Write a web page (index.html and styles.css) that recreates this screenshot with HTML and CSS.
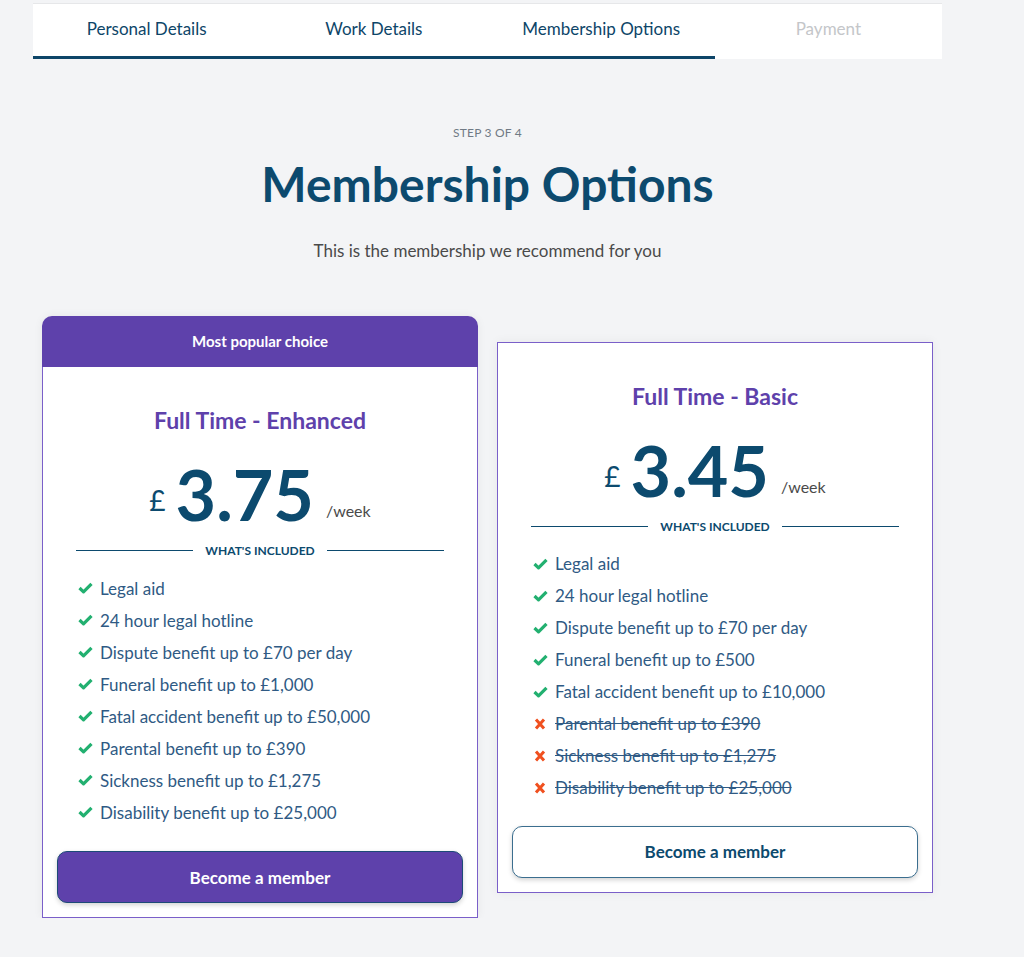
FILE: index.html
```html
<!DOCTYPE html>
<html lang="en">
<head>
  <meta charset="UTF-8" />
  <meta name="viewport" content="width=device-width, initial-scale=1.0"/>
  <title>Membership Options</title>
  <link rel="stylesheet" href="styles.css">
</head>
<body>
  <div class="page">
    <!-- Steps -->
    <nav class="steps">
      <div class="step done">Personal Details</div>
      <div class="step done">Work Details</div>
      <div class="step done">Membership Options</div>
      <div class="step">Payment</div>
    </nav>

    <header class="intro">
      <p class="step-count">STEP 3 OF 4</p>
      <h1>Membership Options</h1>
      <p class="lead">This is the membership we recommend for you</p>
    </header>

    <div class="plans">
      <!-- Enhanced -->
      <div class="plan popular">
        <div class="plan-badge">Most popular choice</div>
        <div class="plan-body">
          <h2 class="plan-name">Full Time - Enhanced</h2>
          <div class="price">
            <span class="currency">£</span>
            <span class="amount">3.75</span>
            <span class="per">/week</span>
          </div>
          <div class="included"><span>WHAT'S INCLUDED</span></div>
          <ul class="benefits">
            <li class="yes">Legal aid</li>
            <li class="yes">24 hour legal hotline</li>
            <li class="yes">Dispute benefit up to £70 per day</li>
            <li class="yes">Funeral benefit up to £1,000</li>
            <li class="yes">Fatal accident benefit up to £50,000</li>
            <li class="yes">Parental benefit up to £390</li>
            <li class="yes">Sickness benefit up to £1,275</li>
            <li class="yes">Disability benefit up to £25,000</li>
          </ul>
          <button class="btn btn-primary">Become a member</button>
        </div>
      </div>

      <!-- Basic -->
      <div class="plan">
        <div class="plan-body">
          <h2 class="plan-name">Full Time - Basic</h2>
          <div class="price">
            <span class="currency">£</span>
            <span class="amount">3.45</span>
            <span class="per">/week</span>
          </div>
          <div class="included"><span>WHAT'S INCLUDED</span></div>
          <ul class="benefits">
            <li class="yes">Legal aid</li>
            <li class="yes">24 hour legal hotline</li>
            <li class="yes">Dispute benefit up to £70 per day</li>
            <li class="yes">Funeral benefit up to £500</li>
            <li class="yes">Fatal accident benefit up to £10,000</li>
            <li class="no">Parental benefit up to £390</li>
            <li class="no">Sickness benefit up to £1,275</li>
            <li class="no">Disability benefit up to £25,000</li>
          </ul>
          <button class="btn btn-outline">Become a member</button>
        </div>
      </div>
    </div>
  </div>
</body>
</html>
```

FILE: styles.css
```css
* {
  box-sizing: border-box;
}

body {
  margin: 0;
  padding-top: 3px;
  background: #f3f4f6;
  font-family: Lato, 'Open Sans', sans-serif;
  color: #2f5a84;
}

.page {
  width: 909px;
  margin-left: 33px;
}

/* steps */
.steps {
  display: grid;
  grid-template-columns: repeat(4, 1fr);
  background: #fff;
  border-top: 1px solid #e6e7e9;
  height: 56px;
}

.step {
  display: flex;
  align-items: center;
  justify-content: center;
  font-size: 17px;
  color: #c4c6c9;
  padding-bottom: 4px;
  border-bottom: 3px solid transparent;
}

.step.done {
  color: #0d4568;
  border-bottom-color: #0d4568;
}

/* intro */
.intro {
  text-align: center;
  margin-top: 66px;
}

.step-count {
  margin: 0;
  font-size: 12px;
  color: #707a85;
  letter-spacing: 0.2px;
}

h1 {
  margin: 14px 0 0;
  font-size: 48px;
  font-weight: 700;
  color: #0c4a6e;
  line-height: 60px;
}

.lead {
  margin: 26px 0 0;
  font-size: 17px;
  color: #4a4a4a;
}

/* plans */
.plans {
  display: flex;
  justify-content: center;
  align-items: center;
  gap: 19px;
  margin-top: 55px;
}

.plan {
  width: 436px;
  background: #fff;
  border: 1px solid #7a5fc9;
  box-shadow: 0 0 10px rgba(0, 0, 0, 0.06);
}

.plan.popular {
  border: none;
  border-radius: 10px 10px 0 0;
  background: transparent;
}

.plan-badge {
  height: 51px;
  display: flex;
  align-items: center;
  justify-content: center;
  background: #5e41ab;
  color: #fff;
  font-size: 15px;
  font-weight: 700;
  border-radius: 10px 10px 0 0;
  padding-bottom: 2px;
}

.plan-body {
  height: 549px;
  padding: 40px 14px 14px;
  display: flex;
  flex-direction: column;
}

.popular .plan-body {
  height: 551px;
  background: #fff;
  border: 1px solid #7a5fc9;
  border-top: none;
}

.plan-name {
  margin: 0;
  text-align: center;
  font-size: 23px;
  font-weight: 700;
  color: #5e41ab;
  line-height: 26px;
}

.price {
  display: flex;
  justify-content: center;
  align-items: baseline;
  color: #0c4a6e;
  margin-top: 24px;
  height: 74px;
}

.currency {
  font-size: 28px;
  margin-right: 10px;
  position: relative;
  top: -10px;
}

.amount {
  font-size: 70px;
  font-weight: 700;
  line-height: 74px;
}

.per {
  font-size: 16px;
  color: #4a4a4a;
  margin-left: 12px;
  position: relative;
  top: -4px;
}

.included {
  display: flex;
  align-items: center;
  gap: 12px;
  margin: 12px 19px 0;
  font-size: 12px;
  font-weight: 700;
  color: #0c4a6e;
}

.included::before,
.included::after {
  content: "";
  flex: 1;
  height: 1px;
  background: #0c4a6e;
}

.benefits {
  list-style: none;
  margin: 14px 0 0;
  padding: 0 0 0 21px;
}

.benefits li {
  display: flex;
  align-items: center;
  height: 32px;
  font-size: 17px;
}

.benefits li::before {
  content: "";
  width: 15px;
  height: 12px;
  margin-right: 7px;
  background-repeat: no-repeat;
  background-position: center;
  flex: none;
}

.benefits li.yes::before {
  background-image: url("data:image/svg+xml,%3Csvg xmlns='http://www.w3.org/2000/svg' viewBox='0 0 15 12'%3E%3Cpath d='M1.5 6 L5.5 9.8 L13.5 1.8' fill='none' stroke='%2322b070' stroke-width='3.2' stroke-linejoin='round'/%3E%3C/svg%3E");
}

.benefits li.no {
  text-decoration: line-through;
}

.benefits li.no::before {
  background-image: url("data:image/svg+xml,%3Csvg xmlns='http://www.w3.org/2000/svg' viewBox='0 0 15 12'%3E%3Cpath d='M3 1.5 L11 10.5 M11 1.5 L3 10.5' fill='none' stroke='%23f0501f' stroke-width='3'/%3E%3C/svg%3E");
}

.btn {
  margin-top: auto;
  height: 52px;
  width: 100%;
  border-radius: 10px;
  font-family: inherit;
  font-size: 17px;
  font-weight: 700;
  cursor: pointer;
  box-shadow: 0 2px 5px rgba(0, 0, 0, 0.18);
}

.btn-primary {
  background: #5e41ab;
  color: #fff;
  border: 1px solid #1d4b77;
}

.btn-outline {
  background: #fff;
  color: #0c4a6e;
  border: 1px solid #3b6e8f;
}
```
